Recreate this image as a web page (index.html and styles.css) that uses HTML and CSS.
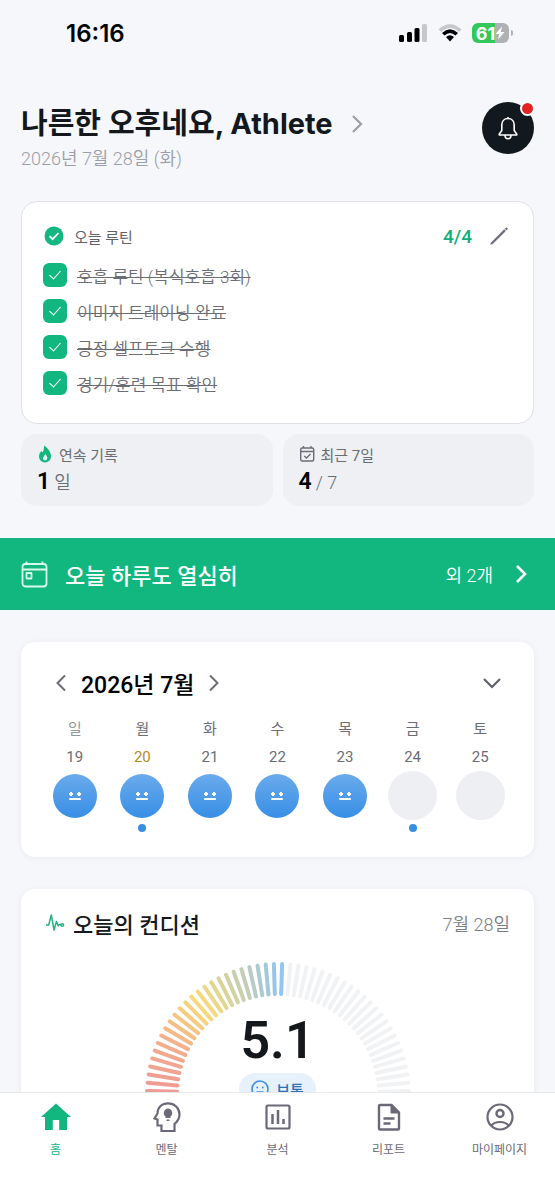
FILE: index.html
```html
<!DOCTYPE html>
<html lang="ko">
<head>
<meta charset="utf-8">
<meta name="viewport" content="width=device-width, initial-scale=1">
<title>홈</title>
<link rel="stylesheet" href="styles.css">
</head>
<body>
<div class="app">
  <div class="status">
    <span class="status-time">16:16</span>
    <div class="status-icons">
      <svg width="29" height="18" viewBox="0 0 29 18" aria-hidden="true"><rect x="0" y="11" width="5" height="7" rx="1.5"/><rect x="8" y="8" width="5" height="10" rx="1.5"/><rect x="15.500" y="4" width="5" height="14" rx="1.500"/><rect x="23" y="0" width="5" height="18" rx="1.500" fill="#c6c7ca"/></svg>
      <svg width="24" height="18" viewBox="0 0 24 18" aria-hidden="true"><path d="M0.500 5.300Q12-5 23.500 5.300L21 8Q12 0 3 8Z" fill="#c6c7ca"/><path d="M4 9Q12 1.600 20 9L17.500 11.500Q12 6.500 6.500 11.500Z"/><path d="M8 13Q12 9.500 16 13L12 17.500Z"/></svg>
      <div class="battery"><span>61</span><svg width="10" height="14" viewBox="0 0 10 14" aria-hidden="true"><path d="M7 0.500L0.500 8H4.300L3 13.500L9.500 6H5.700Z" fill="#fff"/></svg></div>
    </div>
  </div>

  <main class="content">
    <header class="greeting">
      <div class="greeting-text">
        <h1><a href="#profile">나른한 오후네요, Athlete <svg width="12" height="20" viewBox="0 0 12 20" aria-hidden="true"><path d="M2 2L10 10L2 18" fill="none" stroke="#9b9da2" stroke-width="2.200"/></svg></a></h1>
        <p class="date">2026년 7월 28일 (화)</p>
      </div>
      <button class="bell" aria-label="알림">
        <svg width="22" height="26" viewBox="0 0 22 26" fill="none" stroke="#fff" stroke-width="1.600" stroke-linejoin="round" aria-hidden="true"><path d="M11 2V3.500M11 3.500C7 3.500 4.800 6.500 4.800 10V15.500L2.200 19.300V20H19.800V19.300L17.200 15.500V10C17.200 6.500 15 3.500 11 3.500ZM8 20C8 25 14 25 14 20"/></svg>
        <span class="bell-dot"></span>
      </button>
    </header>

    <section class="routine">
      <div class="routine-head">
        <svg width="20" height="20" viewBox="0 0 20 20" aria-hidden="true"><circle cx="10" cy="10" r="9.500" fill="#12b77f"/><path d="M5.500 10.200L8.600 13.200L14.500 7" fill="none" stroke="#fff" stroke-width="1.800"/></svg>
        <h2>오늘 루틴</h2>
        <span class="routine-count">4/4</span>
        <button class="plain" aria-label="루틴 편집"><svg width="20" height="20" viewBox="0 0 20 20" aria-hidden="true"><path d="M1.500 18.500L2.300 16.500L15.200 3.600L16.600 5L3.700 17.800ZM16 2.800L17 1.800Q18.700 1.600 18.400 3.200L17.400 4.200Z" fill="#6b6977" stroke="#6b6977" stroke-width=".4"/></svg></button>
      </div>
      <ul class="checks">
        <li><label><input type="checkbox" checked><span>호흡 루틴 (복식호흡 3회)</span></label></li>
        <li><label><input type="checkbox" checked><span>이미지 트레이닝 완료</span></label></li>
        <li><label><input type="checkbox" checked><span>긍정 셀프토크 수행</span></label></li>
        <li><label><input type="checkbox" checked><span>경기/훈련 목표 확인</span></label></li>
      </ul>
    </section>

    <section class="stats">
      <div class="stat">
        <div class="stat-label"><svg width="16" height="18" viewBox="0 0 16 18" aria-hidden="true"><path d="M7 .5C11 3 14 7 14 11.500A6 6 0 0 1 2 11.500C2 9 3.200 7.200 4.500 6L5.500 7.500C6.700 5.500 7.200 3 7 .5Z" fill="#12b77f"/><path d="M8.200 9C10 11 10.500 12 10.200 13.800A2.200 2.200 0 0 1 5.900 13.600C5.900 12 7.500 11 8.200 9Z" fill="#eef0f4"/></svg>연속 기록</div>
        <div class="stat-value"><strong>1</strong><span>일</span></div>
      </div>
      <div class="stat">
        <div class="stat-label"><svg width="16" height="18" viewBox="0 0 16 18" fill="none" stroke="#6b6d75" stroke-width="1.400" aria-hidden="true"><rect x="1.700" y="3" width="13" height="13" rx="1.500"/><path d="M1.700 6.500H14.700M4.500 1V3M12 1V3M5.300 11L7.500 13L11.500 9"/></svg>최근 7일</div>
        <div class="stat-value"><strong>4</strong><span>/ 7</span></div>
      </div>
    </section>

    <a class="banner" href="#schedule">
      <svg width="27" height="28" viewBox="0 0 27 28" fill="none" stroke="#d9fbee" stroke-width="1.800" aria-hidden="true"><rect x="1.500" y="4" width="24" height="22.500" rx="3"/><path d="M1.500 9.500H25.500M5.500 1.500V4M21.500 1.500V4"/><rect x="5.500" y="13" width="5" height="5.500" rx=".5"/></svg>
      <span class="banner-title">오늘 하루도 열심히</span>
      <span class="banner-more">외 2개</span>
      <svg width="24" height="24" viewBox="0 0 24 24" aria-hidden="true"><path d="M8 4L16 12L8 20" fill="none" stroke="#fff" stroke-width="2.600"/></svg>
    </a>

    <section class="card calendar">
      <div class="calendar-head">
        <button class="plain" aria-label="이전 달"><svg width="12" height="20" viewBox="0 0 12 20" aria-hidden="true"><path d="M10 2.500L2.500 10L10 17.500" fill="none" stroke="#6b6d75" stroke-width="2"/></svg></button>
        <h2>2026년 7월</h2>
        <button class="plain" aria-label="다음 달"><svg width="12" height="20" viewBox="0 0 12 20" aria-hidden="true"><path d="M2 2.500L9.500 10L2 17.500" fill="none" stroke="#6b6d75" stroke-width="2"/></svg></button>
        <button class="plain expand" aria-label="펼치기"><svg width="20" height="20" viewBox="0 0 20 20" aria-hidden="true"><path d="M2 6L10 14L18 6" fill="none" stroke="#5f6168" stroke-width="2.200"/></svg></button>
      </div>
      <table class="week">
        <thead><tr><th class="sunday">일</th><th>월</th><th>화</th><th>수</th><th>목</th><th>금</th><th>토</th></tr></thead>
        <tbody><tr>
          <td><span>19</span><div class="slot"><i class="face"></i></div></td>
          <td class="holiday marked"><span>20</span><div class="slot"><i class="face"></i></div></td>
          <td><span>21</span><div class="slot"><i class="face"></i></div></td>
          <td><span>22</span><div class="slot"><i class="face"></i></div></td>
          <td><span>23</span><div class="slot"><i class="face"></i></div></td>
          <td class="marked"><span>24</span><div class="slot"><i class="empty"></i></div></td>
          <td><span>25</span><div class="slot"><i class="empty"></i></div></td>
        </tr></tbody>
      </table>
    </section>

    <section class="card condition">
      <div class="condition-head">
        <svg width="20" height="20" viewBox="0 0 20 20" fill="none" stroke="#20b483" stroke-width="1.500" stroke-linejoin="round" aria-hidden="true"><path d="M1 12H3.700L6.300 2L9 17L11.500 8.500L13.300 13L14.500 11.500H16"/><circle cx="17.300" cy="12" r="1.300"/></svg>
        <h2>오늘의 컨디션</h2>
        <span class="condition-date">7월 28일</span>
      </div>
      <div class="gauge">
        <svg class="gauge-ticks" width="268" height="136" viewBox="-134 -134 268 136" aria-hidden="true"></svg>
        <div class="gauge-label">
          <strong>5.1</strong>
          <span class="mood"><svg width="18" height="18" viewBox="0 0 18 18" fill="none" stroke="#3f8fdf" stroke-width="1.600" aria-hidden="true"><circle cx="9" cy="9" r="8"/><circle cx="6.200" cy="7.500" r=".9" fill="#3f8fdf" stroke="none"/><circle cx="11.800" cy="7.500" r=".9" fill="#3f8fdf" stroke="none"/><path d="M5.500 12H12.500"/></svg>보통</span>
        </div>
      </div>
    </section>
  </main>

  <nav class="tabs">
    <a class="active" href="#home"><svg width="32" height="32" viewBox="0 0 32 32" aria-hidden="true"><path d="M16 2.500L31 16H27V29H19.200V19H12.800V29H5V16H1Z" fill="#12b77f"/></svg>홈</a>
    <a href="#mental"><svg width="32" height="32" viewBox="0 0 32 32" fill="none" stroke="#6b6977" stroke-width="2.200" aria-hidden="true"><path d="M10.500 30V24.500H6.500V18.500L3.500 17.500L6.500 12.500C6.500 6 11 2.300 17 2.300C23.500 2.300 28.500 7 28.500 13.500C28.500 18 26.500 20.500 23.500 23V30Z"/><path d="M17 7.500A4.500 4.500 0 0 0 14.500 15.500V17H19.500V15.500A4.500 4.500 0 0 0 17 7.500ZM15.500 18.500H18.500V20H15.500Z" fill="#6b6977" stroke="none"/></svg>멘탈</a>
    <a href="#analysis"><svg width="32" height="32" viewBox="0 0 32 32" fill="none" stroke="#6b6977" stroke-width="2.200" aria-hidden="true"><rect x="4.500" y="4.500" width="23" height="23" rx="1.500"/><path d="M10.500 13V23M16 9V23M21.500 18V23" stroke-width="2.500"/></svg>분석</a>
    <a href="#report"><svg width="32" height="32" viewBox="0 0 32 32" fill="none" stroke="#6b6977" stroke-width="2.400" aria-hidden="true"><path d="M6 5Q6 4 7 4H18.500L26 11.500V27.500Q26 28.500 25 28.500H7Q6 28.500 6 27.500Z"/><path d="M18 4V12H26Z" fill="#6b6977" stroke-width="1"/><path d="M10.500 17.500H21.500M10.500 22.500H17.500"/></svg>리포트</a>
    <a href="#my"><svg width="32" height="32" viewBox="0 0 32 32" fill="none" stroke="#6b6977" stroke-width="2.200" aria-hidden="true"><circle cx="16" cy="16" r="12.500"/><circle cx="16" cy="12.500" r="3.500" stroke-width="2.500"/><path d="M7.500 24.500C11 19.800 21 19.800 24.500 24.500"/></svg>마이페이지</a>
  </nav>
</div>
<script src="gauge.js"></script>
</body>
</html>
```

FILE: styles.css
```css
* {
  box-sizing: border-box;
}

body {
  margin: 0;
  background: #f5f7fb;
  color: #14181c;
  font-family: Roboto, "Noto Sans CJK KR", sans-serif;
}

h1, h2, p, ul {
  margin: 0;
  padding: 0;
}

a {
  color: inherit;
  text-decoration: none;
}

svg {
  display: block;
  flex: none;
}

.plain {
  padding: 0;
  border: 0;
  background: none;
}

.app {
  display: flex;
  flex-direction: column;
  height: 100vh;
}

.status {
  display: flex;
  flex: none;
  align-items: center;
  justify-content: space-between;
  height: 66px;
  padding: 0 42px 0 66px;
  color: #000;
  font-family: Inter, sans-serif;
}

.status-time {
  font-size: 24px;
  font-weight: 600;
}

.status-icons {
  display: flex;
  align-items: center;
  gap: 10px;
}

.battery {
  position: relative;
  display: flex;
  align-items: center;
  justify-content: center;
  width: 37px;
  height: 20px;
  margin-right: 4px;
  border-radius: 6px;
  background: linear-gradient(90deg, #34c759 61%, #b0b1b4 61%);
  color: #fff;
  font-size: 18px;
  font-weight: 700;
}

.battery::after {
  content: "";
  position: absolute;
  right: -4px;
  top: 7px;
  width: 2px;
  height: 6px;
  border-radius: 0 2px 2px 0;
  background: #b0b1b4;
}

.content {
  flex: 1;
  min-height: 0;
  overflow: hidden;
}

.greeting {
  display: flex;
  align-items: flex-start;
  justify-content: space-between;
  padding: 36px 21px 0;
}

.greeting h1 {
  font-family: Inter, "Noto Sans CJK KR", sans-serif;
  font-size: 29px;
  font-weight: 700;
  line-height: 43px;
}

.greeting h1 a {
  display: flex;
  align-items: center;
  gap: 18px;
}

.date {
  color: #9b9ea6;
  font-size: 18px;
  font-weight: 350;
  line-height: 28px;
}

.bell {
  position: relative;
  display: flex;
  flex: none;
  align-items: center;
  justify-content: center;
  width: 52px;
  height: 52px;
  padding: 0;
  border: 0;
  border-radius: 50%;
  background: #12191e;
}

.bell-dot {
  position: absolute;
  top: -1px;
  right: -1px;
  width: 15px;
  height: 15px;
  border: 2px solid #fff;
  border-radius: 50%;
  background: #e32222;
}

.routine {
  margin: 28px 21px 0;
  padding: 22px 24px 28px 21px;
  border: 1px solid #e0e1e6;
  border-radius: 16px;
  background: #fff;
}

.routine-head {
  display: flex;
  align-items: center;
  height: 24px;
  padding-left: 1px;
}

.routine-head h2 {
  flex: 1;
  margin-left: 10px;
  color: #5f6168;
  font-size: 15px;
  font-weight: 400;
}

.routine-count {
  margin-right: 17px;
  color: #12b077;
  font-size: 19px;
  font-weight: 500;
}

.checks {
  display: grid;
  gap: 12px;
  margin-top: 15px;
  list-style: none;
}

.checks label {
  display: flex;
  align-items: center;
  gap: 10px;
  height: 24px;
  color: #6b6d75;
  font-size: 17px;
  font-weight: 350;
}

.checks span {
  text-decoration: line-through;
}

.checks input {
  appearance: none;
  display: grid;
  place-items: center;
  width: 24px;
  height: 24px;
  margin: 0;
  border-radius: 6px;
  background: #12b77f;
}

.checks input:checked::after {
  content: "";
  width: 5px;
  height: 10px;
  margin-bottom: 3px;
  border: solid #fff;
  border-width: 0 1px 1px 0;
  transform: rotate(42deg);
}

.stats {
  display: grid;
  grid-template-columns: 1fr 1fr;
  gap: 10px;
  margin: 10px 21px 32px;
}

.stat {
  padding: 7px 16px 8px;
  border-radius: 16px;
  background: #eef0f4;
}

.stat-label {
  display: flex;
  align-items: center;
  gap: 6px;
  height: 26px;
  color: #6b6d75;
  font-size: 15px;
}

.stat-value {
  display: flex;
  align-items: baseline;
  gap: 4px;
  color: #6b6d75;
  font-size: 18px;
  font-weight: 350;
  line-height: 30px;
}

.stat-value strong {
  color: #000;
  font-size: 23px;
  font-weight: 600;
}

.banner {
  display: flex;
  align-items: center;
  height: 72px;
  padding: 0 22px 0 21px;
  background: #12b77f;
  color: #fff;
}

.banner-title {
  flex: 1;
  margin-left: 17px;
  font-size: 22px;
  font-weight: 500;
}

.banner-more {
  margin-right: 16px;
  font-size: 18px;
  font-weight: 350;
}

.card {
  margin: 32px 21px 0;
  border-radius: 14px;
  background: #fff;
  box-shadow: 0 1px 6px rgba(20, 30, 60, 0.06);
}

.calendar {
  padding: 23px 20px 25px;
}

.calendar-head {
  display: flex;
  align-items: center;
  gap: 14px;
  height: 35px;
  padding: 0 12px 0 14px;
}

.calendar-head h2 {
  color: #000;
  font-size: 23px;
  font-weight: 500;
}

.expand {
  margin-left: auto;
}

.week {
  width: 100%;
  margin-top: 13px;
  border-collapse: collapse;
  table-layout: fixed;
  color: #6b6d75;
  text-align: center;
}

.week th {
  height: 28px;
  padding: 0;
  font-size: 15px;
  font-weight: 400;
}

.week .sunday {
  color: #93959b;
}

.week td {
  position: relative;
  padding: 2px 0 12px;
  font-size: 15px;
  line-height: 28px;
}

.week .holiday {
  color: #b38a22;
}

.slot {
  display: grid;
  place-items: center;
  height: 49px;
}

.face {
  position: relative;
  width: 44px;
  height: 44px;
  border-radius: 50%;
  background:
    radial-gradient(circle at 18px 20px, #fff 1.6px, transparent 2px),
    radial-gradient(circle at 26px 20px, #fff 1.6px, transparent 2px),
    linear-gradient(#6aaaec, #388fe6);
}

.face::after {
  content: "";
  position: absolute;
  top: 24px;
  left: 16px;
  width: 12px;
  height: 2px;
  border-radius: 1px;
  background: #fff;
}

.empty {
  width: 49px;
  height: 49px;
  border-radius: 50%;
  background: #eeeff2;
}

.marked::after {
  content: "";
  position: absolute;
  bottom: 0;
  left: calc(50% - 4px);
  width: 8px;
  height: 8px;
  border-radius: 50%;
  background: #388fe0;
}

.condition {
  padding: 16px 24px 40px;
}

.condition-head {
  display: flex;
  align-items: center;
  gap: 8px;
  height: 36px;
}

.condition-head h2 {
  flex: 1;
  font-size: 22px;
  font-weight: 500;
}

.condition-date {
  color: #7b7d84;
  font-size: 18px;
  font-weight: 350;
}

.gauge {
  display: grid;
  justify-items: center;
  margin-top: 20px;
}

.gauge-ticks,
.gauge-label {
  grid-area: 1 / 1;
}

.gauge-ticks line {
  stroke-width: 4;
  stroke-linecap: round;
}

.gauge-label {
  display: flex;
  flex-direction: column;
  align-items: center;
  padding-top: 48px;
}

.gauge-label strong {
  font-size: 52px;
  font-weight: 600;
  line-height: 64px;
}

.mood {
  display: flex;
  align-items: center;
  gap: 7px;
  height: 32px;
  padding: 0 12px;
  border-radius: 16px;
  background: #e7f1fc;
  color: #2f6fb3;
  font-size: 15px;
  font-weight: 500;
}

.tabs {
  display: grid;
  flex: none;
  grid-template-columns: repeat(5, 1fr);
  height: 108px;
  padding-top: 8px;
  border-top: 1px solid #e9eaee;
  background: #fff;
}

.tabs a {
  display: flex;
  flex-direction: column;
  align-items: center;
  gap: 8px;
  color: #6b6977;
  font-size: 12px;
  line-height: 18px;
}

.tabs .active {
  color: #12b77f;
}
```

FILE: gauge.js
```js
const TICKS = 50;
const SCORE = 5.1;
const STOPS = [
  [0, [238, 152, 148]],
  [0.12, [240, 170, 142]],
  [0.28, [248, 219, 122]],
  [0.4, [197, 207, 178]],
  [0.5, [147, 197, 240]]
];

function colorAt(t) {
  for (let i = 1; i < STOPS.length; i++) {
    const [a, from] = STOPS[i - 1];
    const [b, to] = STOPS[i];
    if (t <= b) {
      const k = (t - a) / (b - a);
      return `rgb(${from.map((c, n) => Math.round(c + (to[n] - c) * k)).join(",")})`;
    }
  }
  return `rgb(${STOPS[STOPS.length - 1][1].join(",")})`;
}

const svg = document.querySelector(".gauge-ticks");
const filled = Math.round((SCORE / 10) * TICKS);
for (let i = 0; i < TICKS; i++) {
  const t = (i + 0.5) / TICKS;
  const line = document.createElementNS("http://www.w3.org/2000/svg", "line");
  line.setAttribute("x1", -131);
  line.setAttribute("x2", -101);
  line.setAttribute("transform", `rotate(${t * 180})`);
  line.setAttribute("stroke", i < filled ? colorAt(t) : "#f1f2f4");
  svg.appendChild(line);
}
```
